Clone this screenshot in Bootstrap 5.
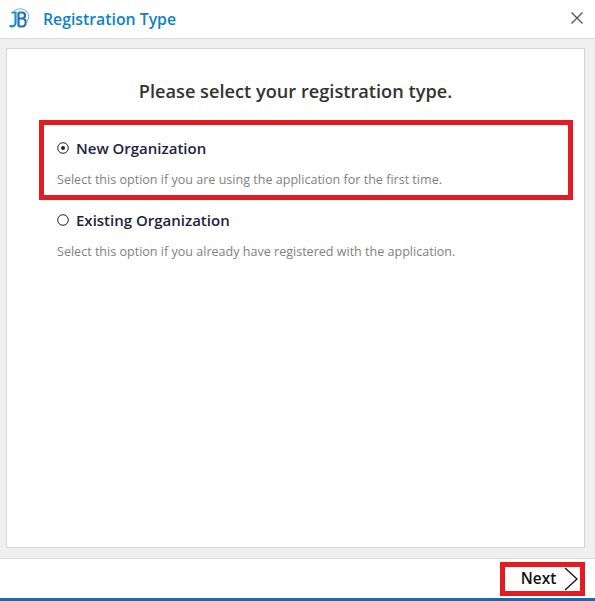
<!DOCTYPE html>
<html lang="en"><head><meta charset="utf-8"><title>Registration Type</title>
<link href="https://cdn.jsdelivr.net/npm/bootstrap@5.3.0/dist/css/bootstrap.min.css" rel="stylesheet">
<style>
html,body{height:601px;overflow:hidden;background:#fff}
body{font-family:"Open Sans","Noto Sans",sans-serif}
.shell{width:595px;height:601px}
.topbar{height:39px;border-bottom:1px solid #d9d9d9;padding:0 11px 2px 4px}
.logo-svg{width:26px;height:22px;margin-right:13px;margin-top:1px}
.app-title{font-size:15.8px;font-weight:600;color:#0b84c6;margin:3px 0 0}
.closer{width:14px;height:14px;padding:0;border:0;background:none}
.middle{height:519px;background:#f0f0f0;padding:9px 10px 10px 6px}
.panel{height:100%;background:#fff;border:1px solid #d4d4d4;border-radius:0;padding-top:30px}
.heading{font-size:18.2px;font-weight:600;color:#333;text-align:center;margin:0 0 17px;line-height:24px}
.options{padding-left:32px;padding-right:11px}
.opt{padding:13px 0 0 13px;height:80px;border:5px solid transparent}
.opt-hot{border-color:#e31b23}
.opt-plain{height:72px;padding-top:10px;border:0;padding-left:18px}
.opt-name{font-size:15px;font-weight:600;color:#1c2340;line-height:20px;gap:7px}
.dot{width:12px;height:12px;flex:none}
.opt-note{font-size:12.55px;color:#7f7f7f;line-height:18px;margin:13px 0 0}
.bottombar{height:40px;border-top:1px solid #d9d9d9;padding-right:10px}
.next-btn{width:85px;height:34px;border:5px solid #e31b23;border-radius:0;background:#fff;color:#111;font-size:15.4px;font-weight:600;padding:0 0 0 14px;gap:8px}
.next-btn svg{width:14px;height:24px}
.strip{height:3px;background:#0b6fb8}
</style></head><body>
<div class="shell d-flex flex-column">
<header class="topbar d-flex align-items-center">
<svg class="logo-svg" viewBox="0 0 26 22" fill="none"><path d="M7.500 4.500h4v10.500c0 3-2.500 4-6 2.800" stroke="#1a8fd0" stroke-width="2.200"/><path d="M14.500 4.500v14M14.500 4.500h3.500c4 0 4 6 0 6h-3.500M18 10.500c5 0 5 8 0 8h-3.500" stroke="#1a6fb5" stroke-width="2.200"/><path d="M10 3c4-3 10-3 13 1c3 4 1 9-1 11" stroke="#5fb3e2" stroke-width="1"/></svg>
<h1 class="app-title flex-grow-1">Registration Type</h1>
<button class="closer d-flex" type="button" aria-label="Close"><svg width="14" height="14" viewBox="0 0 14 14"><path d="M1.500 1.500l11 11M12.500 1.500l-11 11" stroke="#555" stroke-width="1.300"/></svg></button>
</header>
<main class="middle">
<div class="panel">
<h2 class="heading">Please select your registration type.</h2>
<div class="options">
<div class="opt opt-hot">
<div class="opt-name d-flex align-items-center"><svg class="dot" viewBox="0 0 12 12"><circle cx="6" cy="6" r="5.300" fill="#fff" stroke="#222"/><circle cx="6" cy="6" r="2" fill="#222"/></svg>New Organization</div>
<p class="opt-note">Select this option if you are using the application for the first time.</p>
</div>
<div class="opt opt-plain">
<div class="opt-name d-flex align-items-center"><svg class="dot" viewBox="0 0 12 12"><circle cx="6" cy="6" r="5.300" fill="#fff" stroke="#222"/></svg>Existing Organization</div>
<p class="opt-note">Select this option if you already have registered with the application.</p>
</div>
</div>
</div>
</main>
<footer class="bottombar d-flex align-items-center justify-content-end">
<button class="next-btn btn d-flex align-items-center justify-content-center" type="button">Next<svg viewBox="0 0 14 24" fill="none"><path d="M1 1l12 11L1 23" stroke="#111" stroke-width="1.300"/></svg></button>
</footer>
<div class="strip"></div>
</div>
<script src="https://cdn.jsdelivr.net/npm/bootstrap@5.3.0/dist/js/bootstrap.bundle.min.js"></script>
</body></html>
